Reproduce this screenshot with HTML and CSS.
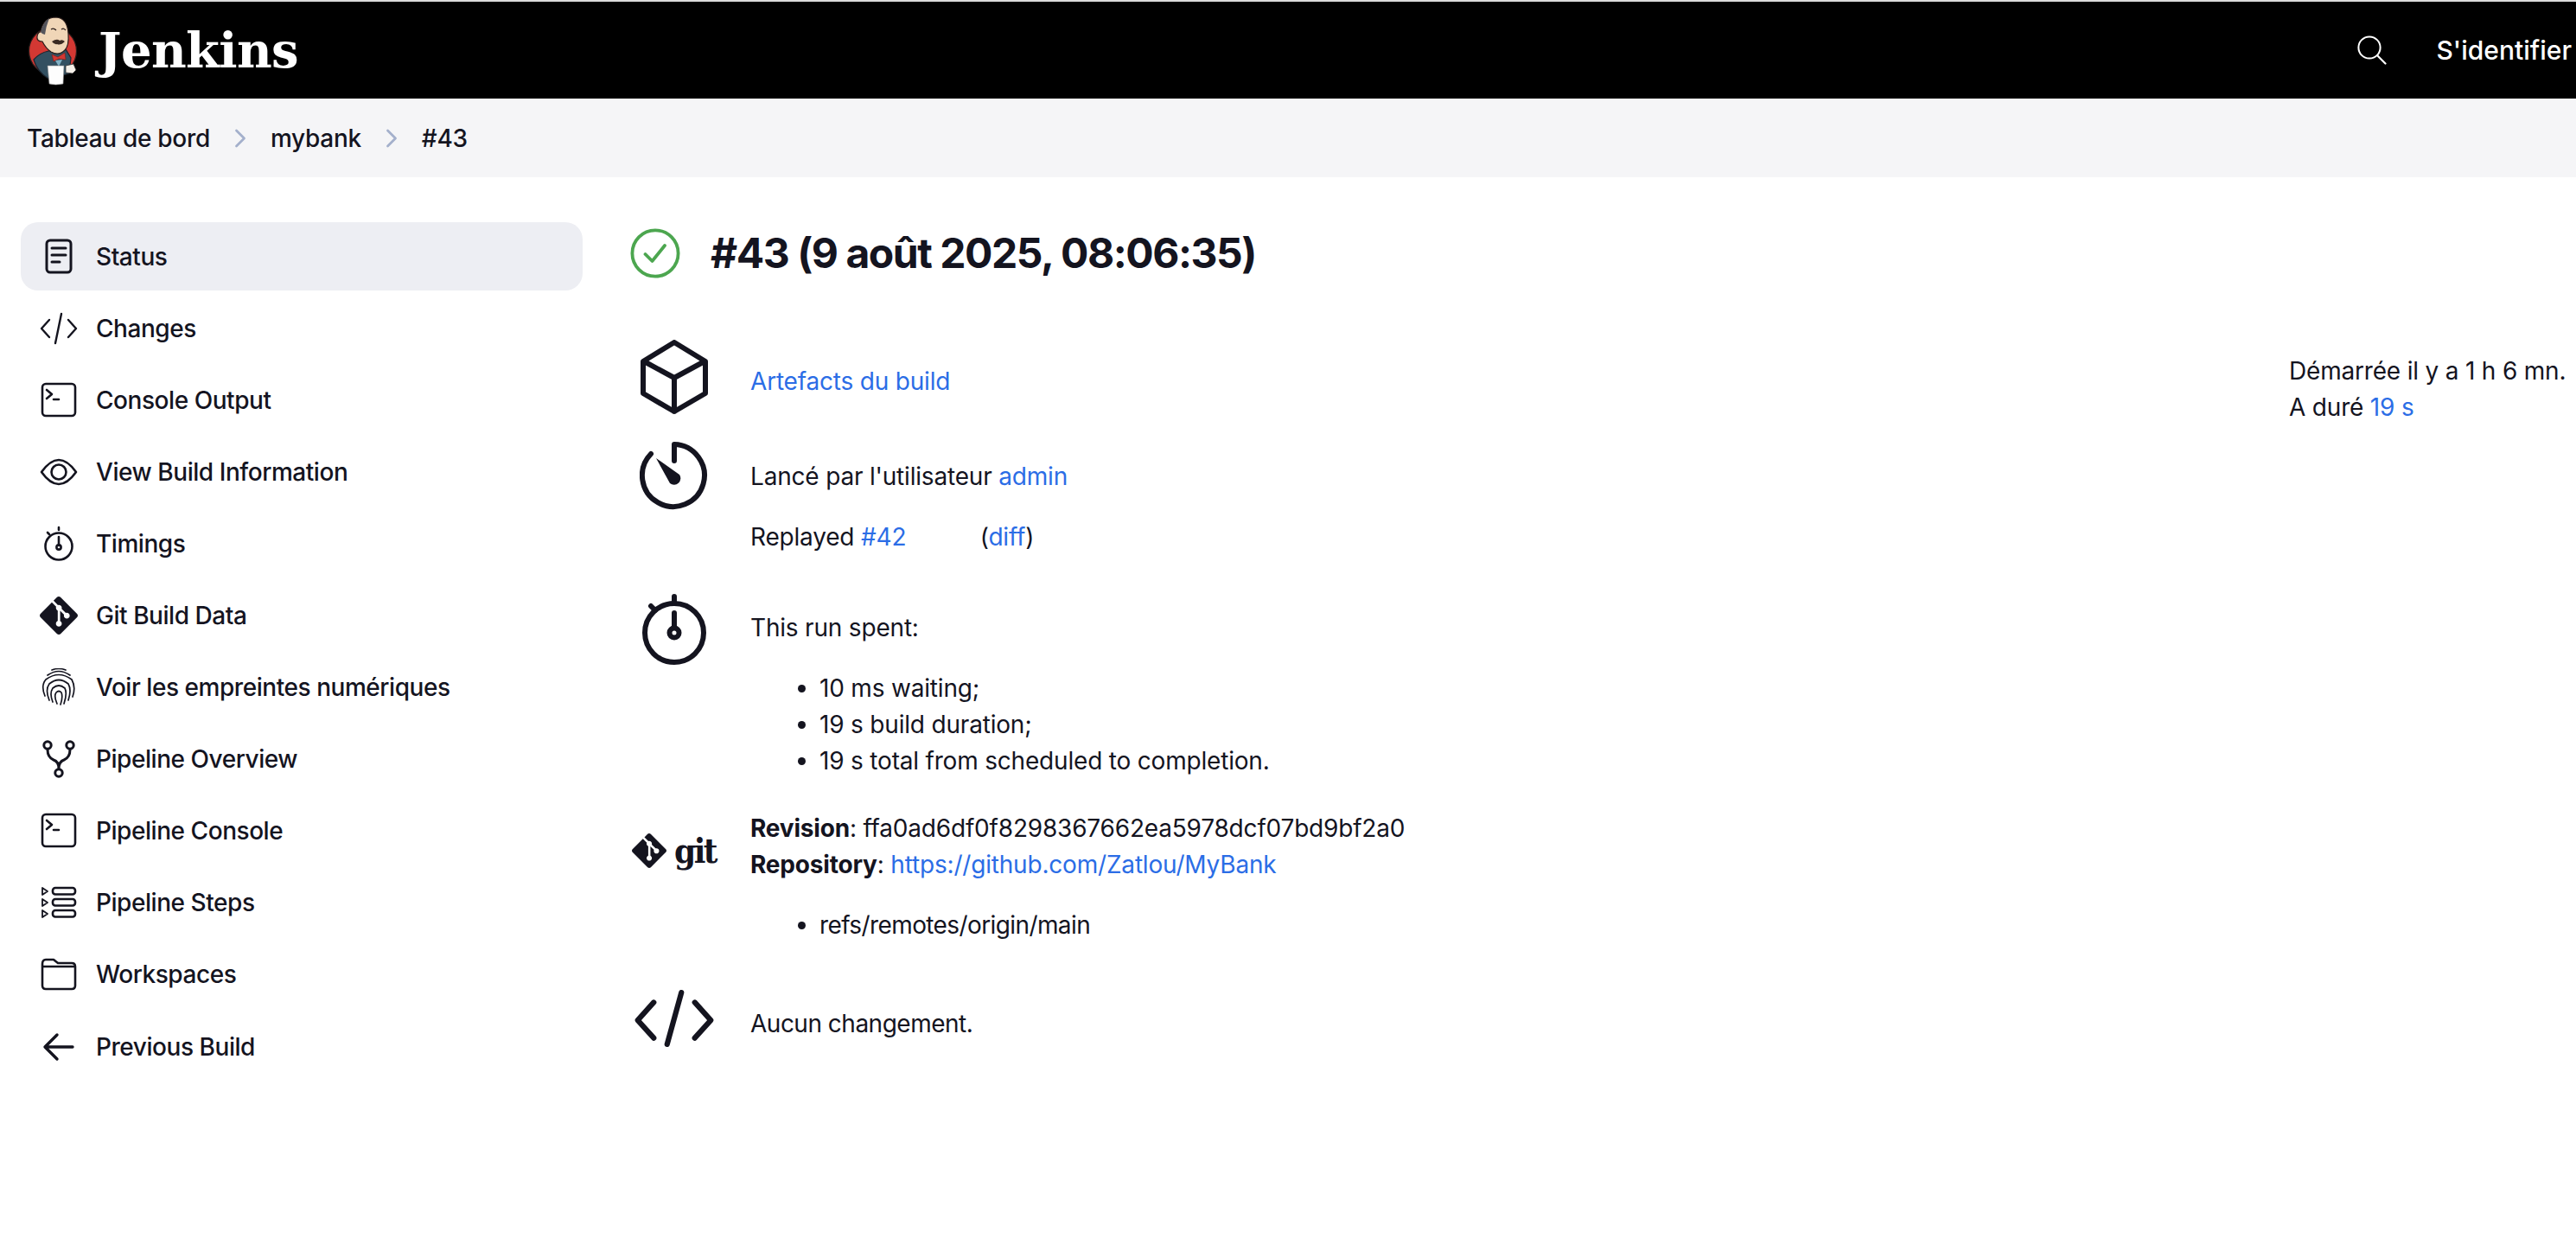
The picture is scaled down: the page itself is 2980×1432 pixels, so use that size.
FILE: index.html
```html
<!DOCTYPE html>
<html lang="fr">
<head>
<meta charset="utf-8">
<title>mybank #43 - Jenkins</title>
<link rel="stylesheet" href="styles.css">
</head>
<body>
<header class="topbar">
  <a class="brand" href="#">
    <svg class="mascot" viewBox="31 16 60 84" aria-hidden="true">
      <circle cx="61" cy="58" r="27.5" fill="#d33833" stroke="#2a1d1b" stroke-width="1.2"/>
      <path d="M39 68 Q46 60 56 58 L76 56 L82 66 L80 84 L56 90 Q43 82 39 68Z" fill="#335061" stroke="#1c2530" stroke-width="1.2"/>
      <path d="M47 36 Q50 19 65 19 Q78 20 79 38 Q80 52 75 57 Q68 64 59 59 Q53 55 49 47 Q42 47 43 41 Q44 36 47 36Z" fill="#f0d6b7" stroke="#2a1d1b" stroke-width="1.2"/>
      <path d="M47 36 Q50 24 57 20 Q53 30 52 39 L49 38Z" fill="#55555c"/>
      <path d="M59 33 Q62 31 65 34 M71 33 Q74 31 76 34" fill="none" stroke="#2a1d1b" stroke-width="1.2"/>
      <path d="M60 47 Q66 43 69 46 Q72 44 75 47 Q70 52 66 50 Q63 51 60 47Z" fill="#3a2a22"/>
      <path d="M60 62 L67 65 L75 60 L76 68 L68 67 L62 70Z" fill="#d33833" stroke="#7a1c18" stroke-width=".6"/>
      <path d="M64 69 L72 68 L68 76Z" fill="#81b0c4"/>
      <path d="M55 75 H74 L73 96 Q64 98 57 96Z" fill="#fdfdfd" stroke="#8a8a8a" stroke-width=".6"/>
      <path d="M76 75 L85 73 L88 80 L84 84 L76 83Z" fill="#f4efe8" stroke="#333" stroke-width=".8"/>
    </svg>
    <span class="wordmark">Jenkins</span>
  </a>
  <div class="top-actions">
    <a class="search" href="#" aria-label="Rechercher">
      <svg viewBox="0 0 34 34" class="search-icon" aria-hidden="true"><circle cx="14" cy="14" r="12.6" fill="none" stroke="#fff" stroke-width="2"/><path d="M23.5 23.5 L32.5 32.5" stroke="#fff" stroke-width="2.2" stroke-linecap="round"/></svg>
    </a>
    <a class="login" href="#">S'identifier</a>
  </div>
</header>

<nav class="crumbs">
  <a href="#">Tableau de bord</a>
  <svg class="chev" viewBox="0 0 14 22" aria-hidden="true"><path d="M2.5 2 L11.5 11 L2.5 20" fill="none" stroke="#a4b0cc" stroke-width="2.8" stroke-linecap="round" stroke-linejoin="round"/></svg>
  <a href="#">mybank</a>
  <svg class="chev" viewBox="0 0 14 22" aria-hidden="true"><path d="M2.5 2 L11.5 11 L2.5 20" fill="none" stroke="#a4b0cc" stroke-width="2.8" stroke-linecap="round" stroke-linejoin="round"/></svg>
  <a href="#">#43</a>
</nav>

<div class="page">
  <aside class="side">
    <a class="item active" href="#"><span class="ico"><svg viewBox="0 0 44 44" class="line heavy"><rect x="8" y="3" width="28" height="37" rx="4"/><path d="M14 12H30M14 20H30M14 28H23"/></svg></span>Status</a>
    <a class="item" href="#"><span class="ico"><svg viewBox="0 0 44 44" class="thin"><path d="M11 12 L2 22 L11 32M33 12 L42 22 L33 32M25 5 L18 39"/></svg></span>Changes</a>
    <a class="item" href="#"><span class="ico"><svg viewBox="0 0 44 44" class="line"><rect x="3" y="3" width="38" height="37" rx="4"/><path d="M8 10 L14 15 L8 20M16 21H22"/></svg></span>Console Output</a>
    <a class="item" href="#"><span class="ico"><svg viewBox="0 0 44 44" class="line"><path d="M2 22 Q12 8 22 8 Q32 8 42 22 Q32 36 22 36 Q12 36 2 22Z"/><circle cx="22" cy="22" r="8.5"/></svg></span>View Build Information</a>
    <a class="item" href="#"><span class="ico"><svg viewBox="0 0 44 44" class="line"><circle cx="22" cy="25" r="15.5"/><path d="M22 3V6M9 9L11 11M22 14V24"/><circle cx="22" cy="26" r="2.6"/></svg></span>Timings</a>
    <a class="item" href="#"><span class="ico"><svg viewBox="0 0 24 24" class="solid"><path d="M23.546 10.93L13.067.452c-.604-.603-1.582-.603-2.188 0L8.708 2.627l2.76 2.76c.645-.215 1.379-.07 1.889.441.516.515.658 1.258.438 1.9l2.658 2.66c.645-.223 1.387-.078 1.9.435.721.72.721 1.884 0 2.604-.719.719-1.881.719-2.6 0-.539-.541-.674-1.337-.404-1.996L12.86 8.955v6.525c.176.086.342.203.488.348.713.721.713 1.883 0 2.6-.719.721-1.889.721-2.609 0-.719-.719-.719-1.879 0-2.598.182-.18.387-.316.605-.406V8.835c-.217-.091-.424-.222-.6-.401-.545-.545-.676-1.342-.396-2.009L7.636 3.7.45 10.881c-.6.605-.6 1.584 0 2.189l10.48 10.477c.604.604 1.582.604 2.186 0l10.43-10.43c.605-.603.605-1.582 0-2.187"/></svg></span>Git Build Data</a>
    <a class="item" href="#"><span class="ico"><svg viewBox="0 0 44 44" class="print"><path d="M14 2 Q22 -1 30 2M9 8 Q22 -1 35 8M6 32 Q1 20 7 13 Q22 2 37 13 Q42 22 38 33M11 37 Q6 25 11 18 Q22 9 33 18 Q37 25 33 37M15 39 Q11 29 15 23 Q22 17 29 23 Q32 29 28 41M20 41 Q16 32 19 28 Q22 25 25 28 Q27 33 24 42"/></svg></span>Voir les empreintes numériques</a>
    <a class="item" href="#"><span class="ico"><svg viewBox="0 0 44 44" class="line heavy"><circle cx="9" cy="6" r="4.2"/><circle cx="35" cy="6" r="4.2"/><circle cx="22" cy="38" r="4.2"/><path d="M9 11 Q9 20 16 23 Q22 25 22 33M35 11 Q35 20 28 23 Q22 25 22 33"/></svg></span>Pipeline Overview</a>
    <a class="item" href="#"><span class="ico"><svg viewBox="0 0 44 44" class="line"><rect x="3" y="3" width="38" height="37" rx="4"/><path d="M8 10 L14 15 L8 20M16 21H22"/></svg></span>Pipeline Console</a>
    <a class="item" href="#"><span class="ico"><svg viewBox="0 0 44 44" class="line"><path class="tri" d="M3 5 L9 9 L3 13ZM3 18 L9 22 L3 26ZM3 31 L9 35 L3 39Z"/><rect x="15" y="5" width="26" height="7.5" rx="3"/><rect x="15" y="18" width="26" height="7.5" rx="3"/><rect x="15" y="31" width="26" height="7.5" rx="3"/></svg></span>Pipeline Steps</a>
    <a class="item" href="#"><span class="ico"><svg viewBox="0 0 44 44" class="line"><path d="M3 10 Q3 5 7 5 H16 L21 9 H37 Q41 9 41 13 V35 Q41 39 37 39 H7 Q3 39 3 35Z M3 13 H41"/></svg></span>Workspaces</a>
    <a class="item" href="#"><span class="ico"><svg viewBox="0 0 44 44" class="bold"><path d="M38 22 H8M20 8 L6 22 L20 36"/></svg></span>Previous Build</a>
  </aside>

  <main class="content">
    <div class="title">
      <svg class="status" viewBox="0 0 58 58" aria-hidden="true"><circle cx="29" cy="29" r="26.6" fill="none" stroke="#4ca64f" stroke-width="3.8"/><path d="M17.5 30 L25.5 38 L40 20" fill="none" stroke="#4ca64f" stroke-width="3.8" stroke-linecap="round" stroke-linejoin="round"/></svg>
      <h1>#43 (9 août 2025, 08:06:35)</h1>
    </div>

    <div class="details">
      <div class="rows">
        <section class="row row-artifacts">
          <span class="big"><svg viewBox="0 0 80 86" class="cube"><path d="M40 3 L76 25 V62 L40 83 L4 62 V25Z M5 25 L40 44 L75 25 M40 44 V83"/></svg></span>
          <div class="body"><p><a href="#">Artefacts du build</a></p></div>
        </section>
        <section class="row row-user">
          <span class="big"><svg viewBox="0 0 80 80" class="cube"><path d="M40 23 V4 A36 36 0 1 1 13 15"/><path class="fill" d="M19 20 L46 39 A7.5 7.5 0 0 1 35 49Z"/></svg></span>
          <div class="body">
            <p>Lancé par l'utilisateur <a href="#">admin</a></p>
            <p class="replay"><span class="replay-from">Replayed <a href="#">#42</a></span> (<a href="#">diff</a>)</p>
          </div>
        </section>
        <section class="row row-time">
          <span class="big"><svg viewBox="0 0 80 84" class="cube"><circle cx="40" cy="47" r="34"/><path d="M40 5 V12M40 24 V41M13 16 L18 21"/><circle cx="40" cy="47" r="5.5"/></svg></span>
          <div class="body">
            <p>This run spent:</p>
            <ul>
              <li>10 ms waiting;</li>
              <li>19 s build duration;</li>
              <li>19 s total from scheduled to completion.</li>
            </ul>
          </div>
        </section>
        <section class="row row-git">
          <span class="gitlogo">
            <svg viewBox="0 0 24 24" class="solid"><path d="M23.546 10.93L13.067.452c-.604-.603-1.582-.603-2.188 0L8.708 2.627l2.76 2.76c.645-.215 1.379-.07 1.889.441.516.515.658 1.258.438 1.9l2.658 2.66c.645-.223 1.387-.078 1.9.435.721.72.721 1.884 0 2.604-.719.719-1.881.719-2.6 0-.539-.541-.674-1.337-.404-1.996L12.86 8.955v6.525c.176.086.342.203.488.348.713.721.713 1.883 0 2.6-.719.721-1.889.721-2.609 0-.719-.719-.719-1.879 0-2.598.182-.18.387-.316.605-.406V8.835c-.217-.091-.424-.222-.6-.401-.545-.545-.676-1.342-.396-2.009L7.636 3.7.45 10.881c-.6.605-.6 1.584 0 2.189l10.48 10.477c.604.604 1.582.604 2.186 0l10.43-10.43c.605-.603.605-1.582 0-2.187"/></svg>
            <span class="gitword">git</span>
          </span>
          <div class="body">
            <p class="tight"><b>Revision</b>: ffa0ad6df0f8298367662ea5978dcf07bd9bf2a0</p>
            <p><b>Repository</b>: <a href="#">https://github.com/Zatlou/MyBank</a></p>
            <ul class="refs">
              <li>refs/remotes/origin/main</li>
            </ul>
          </div>
        </section>
        <section class="row row-changes">
          <span class="big"><svg viewBox="0 0 90 64" class="code"><path d="M22 14 L4 34 L22 54M68 14 L86 34 L68 54M53 3 L37 61"/></svg></span>
          <div class="body"><p>Aucun changement.</p></div>
        </section>
      </div>
      <div class="aside">
        <p>Démarrée il y a 1 h 6 mn.</p>
        <p>A duré <a href="#">19 s</a></p>
      </div>
    </div>
  </main>
</div>
</body>
</html>
```

FILE: styles.css
```css
* { box-sizing: border-box; }
html, body { margin: 0; padding: 0; }
body {
  background: #fff;
  color: #14141f;
  font-family: Inter, "Liberation Sans", sans-serif;
  font-size: 28px;
  line-height: 42px;
  letter-spacing: -.19px;
  overflow-x: hidden;
  border-top: 2px solid #dcdcdc;
}
a { color: #2b6de6; text-decoration: none; }
p { margin: 0; }

.topbar {
  height: 112px;
  background: #000;
  display: flex;
  align-items: center;
  justify-content: space-between;
  padding-left: 31px;
}
.brand { display: flex; align-items: center; gap: 23px; color: #fff; }
.mascot { width: 60px; height: 84px; display: block; margin-top: 2px; }
.wordmark {
  font-family: "DejaVu Serif", serif;
  font-weight: 700;
  font-size: 56px;
  line-height: 60px;
  letter-spacing: -.6px;
  color: #fff;
}
.top-actions { display: flex; align-items: center; gap: 57px; margin-right: 5px; }
.search { display: flex; }
.search-icon { width: 34px; height: 34px; display: block; }
.login { color: #fff; font-size: 30px; font-weight: 500; white-space: nowrap; letter-spacing: 0; }

.crumbs {
  height: 91px;
  background: #f5f5f7;
  display: flex;
  align-items: center;
  padding-left: 31px;
}
.crumbs a { color: #14141f; font-weight: 500; letter-spacing: -.3px; }
.chev { width: 14px; height: 22px; margin: 0 28px; display: block; }

.page { display: flex; padding-top: 52px; }
.side {
  width: 650px;
  margin-left: 24px;
  flex: none;
  display: flex;
  flex-direction: column;
  gap: 4.1px;
}
.item {
  height: 79px;
  display: flex;
  align-items: center;
  gap: 21px;
  padding-left: 22px;
  border-radius: 20px;
  color: #14141f;
  font-weight: 500;
  letter-spacing: -.45px;
}
.item.active { background: #edeef3; }
.ico { width: 44px; height: 44px; flex: none; }
.ico svg { width: 44px; height: 44px; display: block; }
.line, .thin, .bold, .print, .cube, .code {
  fill: none;
  stroke: #14141f;
  stroke-linecap: round;
  stroke-linejoin: round;
}
.line { stroke-width: 2.6; }
.line.heavy { stroke-width: 3; }
.line .tri { stroke-width: 1.8; }
.thin { stroke-width: 2.4; }
.bold { stroke-width: 3.4; }
.print { stroke-width: 1.7; }
.solid { fill: #14141f; }
.cube { stroke-width: 6; width: 100%; height: 100%; display: block; }
.cube .fill { fill: #14141f; stroke: none; }
.code { stroke-width: 6; width: 100%; height: 100%; display: block; }

.content { flex: 1; min-width: 0; margin-left: 55px; }
.title { display: flex; align-items: center; height: 72px; gap: 35px; margin-bottom: 64px; }
.status { width: 58px; height: 58px; flex: none; display: block; }
h1 { margin: 0; font-size: 48px; line-height: 72px; font-weight: 700; letter-spacing: -1.45px; }

.details { display: flex; justify-content: space-between; }
.rows { flex: 1; min-width: 0; }
.aside { width: 332px; flex: none; padding-top: 15px; white-space: nowrap; }

.row { display: flex; }
.big { width: 80px; margin: 0 9px 0 11px; flex: none; display: block; }
.body { margin-left: 39px; flex: 1; min-width: 0; }
.body p + p { margin-top: 28px; }
.body p.tight + p { margin-top: 0; }
.body ul { margin: 28px 0 0; padding: 0 0 0 80px; }
.body ul.refs { letter-spacing: -.6px; }

.row-artifacts { height: 117px; }
.row-artifacts .big { height: 86px; }
.row-artifacts .body { padding-top: 27px; }
.row-user .big { height: 80px; }
.row-user .body { padding-top: 20px; }
.replay-from { display: inline-block; width: 258px; }
.row-time { margin-top: 43px; }
.row-time .big { height: 84px; }
.row-time .body { padding-top: 20px; }
.row-git { margin-top: 36px; }
.gitlogo {
  width: 100px;
  flex: none;
  display: flex;
  align-items: center;
  height: 84px;
  gap: 9px;
  margin-top: 5px;
  padding-left: 2px;
}
.gitlogo svg { width: 40px; height: 40px; flex: none; display: block; }
.gitword {
  font-family: "DejaVu Serif", serif;
  font-stretch: condensed;
  font-weight: 700;
  font-size: 40px;
  line-height: 50px;
  letter-spacing: -2.5px;
}
.row-changes { margin-top: 49px; }
.row-changes .big { width: 94px; height: 66px; margin: 5px 2px 0 4px; }
.row-changes .body { padding-top: 23px; letter-spacing: -.5px; }
```
